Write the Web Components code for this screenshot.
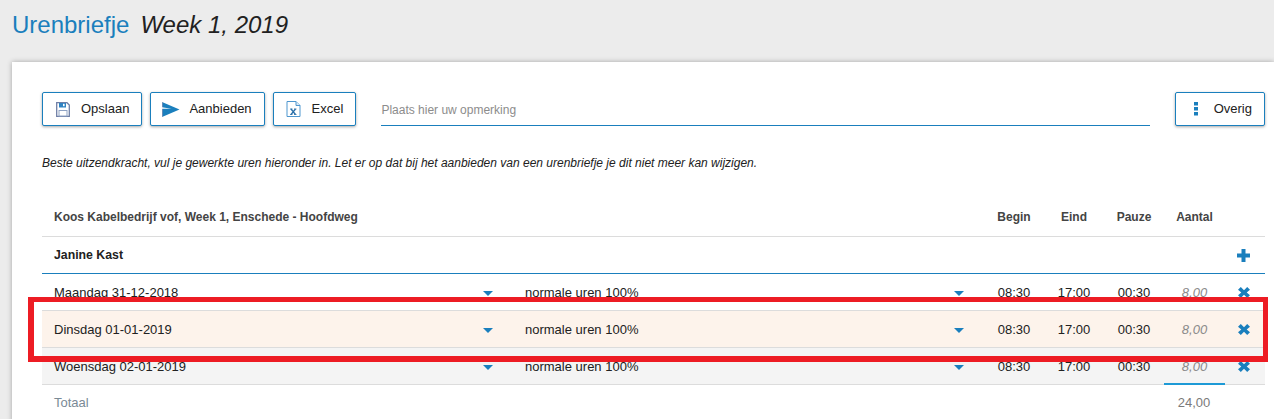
<!DOCTYPE html>
<html>
<head>
<meta charset="utf-8">
<title>Urenbriefje</title>
<style>
    html, body { margin: 0; height: 419px; overflow: hidden; background: #ececec; }
    body { font-family: "Liberation Sans", Arial, sans-serif; color: #212121; }
</style>
</head>
<body>

<uren-page>
    <uren-toolbar slot="toolbar"></uren-toolbar>
    <uren-table slot="table">
        <uren-row day="Maandag 31-12-2018"></uren-row>
        <uren-row day="Dinsdag 01-01-2019" tint="#fdf3eb"></uren-row>
        <uren-row day="Woensdag 02-01-2019" tint="#f4f4f4" mark></uren-row>
    </uren-table>
</uren-page>

<script>
const ICONS = {
    save: `<svg width="14" height="15" viewBox="0 0 14 15"><path d="M.7.7h10.300l2.300 2.300v11.300H.7z" fill="#fff" stroke="#6f7fa6" stroke-width="1.300"/><rect x="3" y="1" width="7" height="4.500" fill="#2f83c2"/><rect x="7" y="1.800" width="1.600" height="2.400" fill="#fff"/><rect x="3" y="8.500" width="8" height="5.500" fill="#fff" stroke="#8fa3c4"/></svg>`,
    send: `<svg width="18" height="15" viewBox="0 0 18 15"><path d="M0 0 17.500 7.500 0 15z" fill="#1a7fbd"/><path d="M0 .2v14.600" stroke="#d9a0b0" stroke-width=".8"/><path d="M0 6.800H9.500L0 5.200z" fill="#fff"/></svg>`,
    excel: `<svg width="15" height="16" viewBox="0 0 15 16"><path d="M1 .5h9l4 4v11H1z" fill="#fff" stroke="#4f97cf"/><path d="M10 .5v4h4" fill="#dbe9f5" stroke="#4f97cf"/><path d="M5 8l4.500 5.500M9.500 8 5 13.500" stroke="#2a6fa8" stroke-width="1.300"/><path d="M4 8h2.500M8 8h2.500M4 13.500h2.500M8 13.500h2.500" stroke="#2a6fa8" stroke-width=".8"/></svg>`,
    dots: `<svg width="4" height="14" viewBox="0 0 4 14"><g fill="#1a7fbd"><rect width="4" height="3.500"/><rect y="5" width="4" height="3.500"/><rect y="10" width="4" height="3.500"/></g></svg>`,
    plus: `<svg width="13" height="13" viewBox="0 0 13 13"><path d="M4.500 0h4v4.500H13v4H8.500V13h-4V8.500H0v-4h4.500z" fill="#1a7fbd"/></svg>`,
    cross: `<svg width="12" height="11" viewBox="0 0 12 11"><path d="M2.800 0 6 3.200 9.200 0 12 2.800 8.700 5.500 12 8.200 9.200 11 6 7.800 2.800 11 0 8.200 3.300 5.500 0 2.800z" fill="#1a7fbd"/></svg>`,
    caret: `<svg width="10" height="5" viewBox="0 0 10 5"><path d="M0 0h10L5 5z" fill="#1a7fbd"/></svg>`
};

class UrenButton extends HTMLElement {
    connectedCallback() {
        this.attachShadow({mode: "open"});
        this.shadowRoot.innerHTML = `
            <style>
                :host {
                    display: flex;
                    align-items: center;
                    box-sizing: border-box;
                    height: 34px;
                    padding: 0 12px 2px 11px;
                    gap: 9px;
                    background: #fff;
                    border: 1px solid #1a7fbd;
                    border-radius: 2px;
                    box-shadow: 0 1px 3px rgba(0,0,0,.35);
                    font-size: 13px;
                    color: #212121;
                    cursor: pointer;
                }
                span { display: flex; justify-content: center; width: 18px; margin-top: 2px; }
            </style>
            <span>${ICONS[this.getAttribute("icon")]}</span>
            <slot></slot>
        `;
    }
}
customElements.define("uren-button", UrenButton);

class UrenToolbar extends HTMLElement {
    connectedCallback() {
        this.attachShadow({mode: "open"});
        this.shadowRoot.innerHTML = `
            <style>
                :host { display: flex; align-items: flex-start; gap: 8px; }
                .remark {
                    flex: 1;
                    box-sizing: border-box;
                    height: 34px;
                    margin: 0 17px;
                    padding-top: 11px;
                    border-bottom: 1px solid #1a7fbd;
                    font-size: 12px;
                    color: #8c8c8c;
                }
            </style>
            <uren-button icon="save">Opslaan</uren-button>
            <uren-button icon="send">Aanbieden</uren-button>
            <uren-button icon="excel">Excel</uren-button>
            <div class="remark">Plaats hier uw opmerking</div>
            <uren-button icon="dots">Overig</uren-button>
        `;
    }
}
customElements.define("uren-toolbar", UrenToolbar);

const COLUMNS = "471px 471px 60px 60px 60px 61px 1fr";

class UrenRow extends HTMLElement {
    connectedCallback() {
        const mark = this.hasAttribute("mark");
        this.attachShadow({mode: "open"});
        this.shadowRoot.innerHTML = `
            <style>
                :host {
                    display: grid;
                    grid-template-columns: ${COLUMNS};
                    align-items: center;
                    height: 37px;
                    box-sizing: border-box;
                    padding-top: 1px;
                    border-bottom: 1px solid #dcdcdc;
                    background: ${this.getAttribute("tint") || "#fff"};
                    font-size: 13px;
                    color: #212121;
                }
                .select { display: flex; justify-content: space-between; align-items: center; padding: 0 20px 0 12px; }
                .select svg { margin-top: 2px; }
                .time { text-align: center; }
                .count { align-self: stretch; display: flex; align-items: center; justify-content: center;
                    font-style: italic; color: #8a8a8a; }
                .count.mark { box-shadow: 0 1px 0 #1e9ad6, inset 0 -1px 0 #1e9ad6; position: relative; }
                .act { display: flex; justify-content: center; padding-right: 3px; }
            </style>
            <div class="select">${this.getAttribute("day")}${ICONS.caret}</div>
            <div class="select">normale uren 100%${ICONS.caret}</div>
            <div class="time">08:30</div>
            <div class="time">17:00</div>
            <div class="time">00:30</div>
            <div class="count ${mark ? "mark" : ""}">8,00</div>
            <div class="act">${ICONS.cross}</div>
        `;
    }
}
customElements.define("uren-row", UrenRow);

class UrenTable extends HTMLElement {
    connectedCallback() {
        this.attachShadow({mode: "open"});
        this.shadowRoot.innerHTML = `
            <style>
                :host { display: block; font-size: 12px; color: #212121; }
                .head, .total {
                    display: grid;
                    grid-template-columns: ${COLUMNS};
                    align-items: center;
                }
                .head {
                    height: 39px;
                    box-sizing: border-box;
                    border-bottom: 1px solid #dcdcdc;
                    font-size: 12px;
                    font-weight: bold;
                    color: #444;
                }
                .first { grid-column: 1 / 3; padding-left: 12px; }
                .c { text-align: center; }
                .group {
                    display: flex;
                    justify-content: space-between;
                    align-items: center;
                    height: 37px;
                    box-sizing: border-box;
                    padding: 0 15px 0 12px;
                    border-bottom: 1px solid #1a7fbd;
                    font-size: 12.300px;
                    font-weight: bold;
                    color: #212121;
                }
                .group svg { display: block; }
                .total { height: 34px; font-size: 13px; color: #7a8a96; }
                .total .sum { color: #7a7a7a; padding-right: 1px; }
            </style>
            <div class="head">
                <div class="first">Koos Kabelbedrijf vof, Week 1, Enschede - Hoofdweg</div>
                <div class="c">Begin</div><div class="c">Eind</div><div class="c">Pauze</div><div class="c">Aantal</div>
            </div>
            <div class="group">Janine Kast ${ICONS.plus}</div>
            <slot></slot>
            <div class="total">
                <div class="first">Totaal</div>
                <div></div><div></div><div></div>
                <div class="c sum">24,00</div>
            </div>
        `;
    }
}
customElements.define("uren-table", UrenTable);

class UrenPage extends HTMLElement {
    connectedCallback() {
        this.attachShadow({mode: "open"});
        this.shadowRoot.innerHTML = `
            <style>
                :host { display: block; position: relative; height: 419px; overflow: hidden; }
                header {
                    display: flex;
                    align-items: baseline;
                    gap: 11px;
                    height: 62px;
                    box-sizing: border-box;
                    padding: 11px 0 0 12px;
                    font-size: 24px;
                }
                h1 { margin: 0; font: inherit; color: #1a7fbd; }
                em { color: #212121; }
                .card {
                    margin-left: 12px;
                    padding: 30px 9px 0 30px;
                    height: 400px;
                    box-sizing: border-box;
                    background: #fff;
                    box-shadow: 0 0 5px rgba(0,0,0,.3);
                }
                p {
                    margin: 31px 0 0;
                    height: 41px;
                    font-size: 12px;
                    line-height: 12px;
                    font-style: italic;
                    color: #212121;
                }
                .alert {
                    position: absolute;
                    left: 28px;
                    top: 297px;
                    width: 1240px;
                    height: 65px;
                    box-sizing: border-box;
                    border: 6px solid #ed1c24;
                    border-top-width: 5px;
                    border-right-width: 5px;
                    pointer-events: none;
                }
            </style>
            <header><h1>Urenbriefje</h1><em>Week 1, 2019</em></header>
            <section class="card">
                <slot name="toolbar"></slot>
                <p>Beste uitzendkracht, vul je gewerkte uren hieronder in. Let er op dat bij het aanbieden van een urenbriefje je dit niet meer kan wijzigen.</p>
                <slot name="table"></slot>
            </section>
            <div class="alert"></div>
        `;
    }
}
customElements.define("uren-page", UrenPage);
</script>
</body>
</html>
